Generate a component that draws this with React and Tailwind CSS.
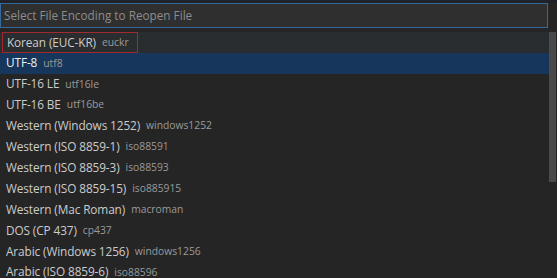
import { useState } from "react";

const encodings = [
  ["Korean (EUC-KR)", "euckr"],
  ["UTF-8", "utf8"],
  ["UTF-16 LE", "utf16le"],
  ["UTF-16 BE", "utf16be"],
  ["Western (Windows 1252)", "windows1252"],
  ["Western (ISO 8859-1)", "iso88591"],
  ["Western (ISO 8859-3)", "iso88593"],
  ["Western (ISO 8859-15)", "iso885915"],
  ["Western (Mac Roman)", "macroman"],
  ["DOS (CP 437)", "cp437"],
  ["Arabic (Windows 1256)", "windows1256"],
  ["Arabic (ISO 8859-6)", "iso88596"],
];

function Row({ label, desc, focused, selected }) {
  return (
    <div
      className={`h-[20.9px] flex items-center px-[2px] ${selected ? "bg-[#16375b]" : ""} ${
        focused ? "bg-[#2a2d2f]" : ""
      }`}
    >
      <div
        className={`h-full flex items-center gap-[6px] px-[4px] ${
          focused ? "border border-[#a12a2e] pr-[8px]" : ""
        }`}
      >
        <span
          className={`text-[11.8px] font-medium tracking-[-0.1px] ${
            selected ? "text-[#eeeeee]" : "text-[#cccccc]"
          }`}
        >
          {label}
        </span>
        <span className="text-[10.3px] text-[#9a9a9a]">{desc}</span>
      </div>
    </div>
  );
}

export default function App() {
  const [active] = useState(1);

  return (
    <div
      className="w-[557px] h-[278px] overflow-hidden bg-[#252526] flex flex-col"
      style={{ fontFamily: '"Open Sans", "Noto Sans", sans-serif' }}
    >
      <div className="h-[3px] bg-[#1f2329] shrink-0" />
      <div className="flex shrink-0 pr-[9px]">
        <div className="flex-1 h-[25px] border border-[#36699a] bg-[#2f2f2f] flex items-center px-[3px]">
          <span className="text-[11.75px] text-[#8c8c8c]">Select File Encoding to Reopen File</span>
        </div>
      </div>
      <div className="h-[4px] shrink-0" />
      <div className="flex flex-1 min-h-0">
        <div className="flex-1">
          {encodings.map(([label, desc], i) => (
            <Row key={desc} label={label} desc={desc} focused={i === 0} selected={i === active} />
          ))}
        </div>
        <div className="w-[7px] mr-[1px] self-start h-[150px] bg-[#4a4a4a]" />
      </div>
    </div>
  );
}
